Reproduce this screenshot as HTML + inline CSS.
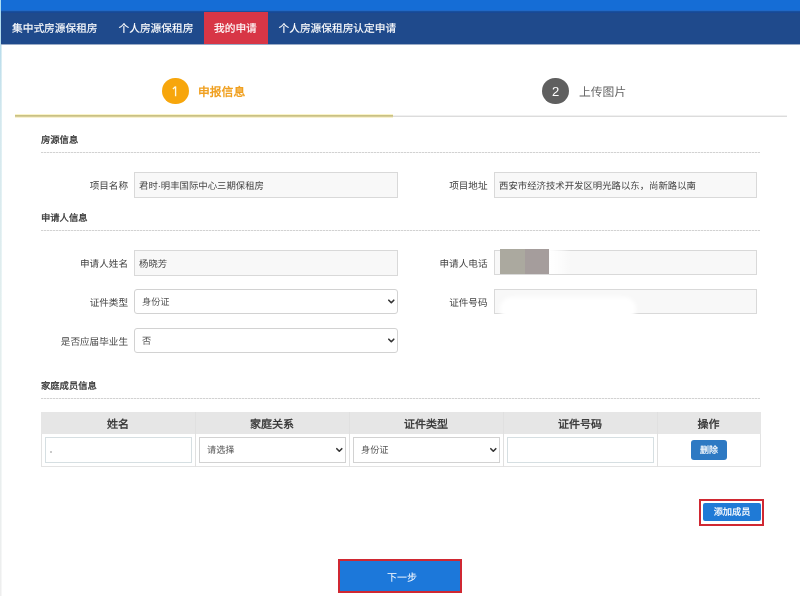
<!DOCTYPE html>
<html lang="zh-CN"><head><meta charset="utf-8">
<style>
*{margin:0;padding:0;box-sizing:border-box}
html,body{width:800px;height:596px;overflow:hidden;background:#fff;font-family:"Liberation Sans",sans-serif;position:relative;text-rendering:geometricPrecision}
#wrap{position:absolute;left:0;top:0;width:800px;height:596px;will-change:transform}
.abs{position:absolute}
#leftedge{left:0;top:0;width:1px;height:596px;background:linear-gradient(#a8dcf5 0,#b8dcec 45px,#d4e8ee 120px,#e2eeee 300px,#eeeeee 596px)}
#leftedge2{left:1px;top:45px;width:1px;height:551px;background:linear-gradient(#d8ecf2,#eef6f6 300px,#f6f6f6)}
#topband{left:0;top:0;width:800px;height:11px;background:linear-gradient(#156dd6 0 10px,#2068c6 10px 11px)}
#nav{left:0;top:11px;width:800px;height:34px;background:linear-gradient(#17509f 0 1px,#184896 1px 2px,#1f4a8c 2px 33px,#9aabc6 33px 34px)}
.nv{position:absolute;top:13px;height:33px;line-height:33px;color:#fff;-webkit-text-stroke:0.15px #fff;font-size:10.7px;white-space:nowrap}
#tab{left:204px;top:12px;width:64px;height:32px;background:#d83646}
.circ{position:absolute;width:27px;height:27px;border-radius:50%;color:#fff;font-size:13px;text-align:center;line-height:27px}
.steptxt{position:absolute;font-size:11.8px;white-space:nowrap;line-height:14px}
.hdr{position:absolute;left:41px;font-size:9.3px;font-weight:normal;-webkit-text-stroke:0.3px #333;color:#333;white-space:nowrap;line-height:11px}
.dot{position:absolute;left:41px;width:719px;height:1px;background:repeating-linear-gradient(90deg,#d2d2d2 0 2px,#f0f0f0 2px 3px)}
.lbl{position:absolute;font-size:9.6px;color:#444;white-space:nowrap;text-align:right;line-height:11px}
.inp{position:absolute;height:26px;background:#f8f8f8;border:1px solid #d9d9d9;font-size:9.4px;color:#444;line-height:26px;padding-left:4px;white-space:nowrap}
.sel{position:absolute;height:25px;background:#fff;border:1px solid #d2d2d2;border-radius:3px;font-size:9.2px;color:#555;line-height:25px;padding-left:7px;white-space:nowrap}
.chev{position:absolute;width:8px;height:6px}
.th{position:absolute;top:414px;height:22px;line-height:22px;text-align:center;font-size:11px;font-weight:normal;-webkit-text-stroke:0.35px #333;color:#333;white-space:nowrap}
</style></head><body><div id="wrap">
<div class="abs" id="topband"></div>
<div class="abs" id="nav"></div>
<div class="abs" id="tab"></div>
<div class="nv" style="left:12px">集中式房源保租房</div>
<div class="nv" style="left:118.5px">个人房源保租房</div>
<div class="nv" style="left:214px">我的申请</div>
<div class="nv" style="left:278.5px">个人房源保租房认定申请</div>
<div class="abs" id="leftedge"></div><div class="abs" id="leftedge2"></div>

<!-- steps -->
<div class="circ" style="left:162px;top:77.7px;width:26.6px;height:26.6px;background:#f7a60c"></div>
<div class="steptxt" style="left:198px;top:85px;color:#f0a020;font-weight:bold">申报信息</div>
<div class="circ" style="left:542.3px;top:77.7px;width:26.6px;height:26.6px;line-height:28px;background:#5f5f5f">2</div>
<div class="steptxt" style="left:579px;top:85px;color:#666">上传图片</div>
<div class="abs" style="left:15px;top:114px;width:378px;height:4px;background:linear-gradient(#fbf4c8 0 1px,#c9c184 1px 2px,#d6cd99 2px 3px,#f8f1cf 3px 4px)"></div>
<div class="abs" style="left:393px;top:115px;width:394px;height:2px;background:linear-gradient(#f0f0f0 0 1px,#dcdcdc 1px 2px)"></div>

<!-- section 1 -->
<div class="hdr" style="top:135px">房源信息</div>
<div class="dot" style="top:152px"></div>
<div class="lbl" style="left:61px;width:67px;top:181px">项目名称</div>
<div class="inp" style="left:134px;top:172px;width:264px">君时·明丰国际中心三期保租房</div>
<div class="lbl" style="left:421px;width:66.5px;top:181px">项目地址</div>
<div class="inp" style="left:494px;top:172px;width:263px">西安市经济技术开发区明光路以东，尚新路以南</div>

<!-- section 2 -->
<div class="hdr" style="top:213px">申请人信息</div>
<div class="dot" style="top:230px"></div>
<div class="lbl" style="left:61px;width:67px;top:259px">申请人姓名</div>
<div class="inp" style="left:134px;top:250px;width:264px">杨晓芳</div>
<div class="lbl" style="left:421px;width:66.5px;top:259px">申请人电话</div>
<div class="inp" style="left:494px;top:250px;width:263px;height:25px"></div>
<div class="abs" style="left:500px;top:249px;width:25px;height:25px;background:#aba99f"></div>
<div class="abs" style="left:525px;top:249px;width:25px;height:25px;background:#a59d9c"></div>
<div class="abs" style="left:549px;top:249px;width:22px;height:25px;background:linear-gradient(90deg,#fff,rgba(255,255,255,.5) 60%,rgba(255,255,255,0));"></div>

<div class="lbl" style="left:61px;width:67px;top:298px">证件类型</div>
<div class="sel" style="left:134px;top:289px;width:264px">身份证</div>
<div class="lbl" style="left:421px;width:66.5px;top:298px">证件号码</div>
<div class="inp" style="left:494px;top:289px;width:263px;height:25px"></div>
<div class="abs" style="left:500px;top:297px;width:136px;height:24px;background:#fff;border-radius:12px;filter:blur(2px)"></div>

<div class="lbl" style="left:41px;width:87px;top:337px">是否应届毕业生</div>
<div class="sel" style="left:134px;top:328px;width:264px">否</div>

<!-- section 3 -->
<div class="hdr" style="top:381px">家庭成员信息</div>
<div class="dot" style="top:398px"></div>

<!-- table -->
<div class="abs" style="left:41px;top:412px;width:720px;height:55px;border:1px solid #e3e3e3"></div>
<div class="abs" style="left:41px;top:412px;width:720px;height:22px;background:#e6e6e6"></div>
<div class="abs" style="left:195px;top:412px;width:1px;height:55px;background:#e0e0e0"></div>
<div class="abs" style="left:349px;top:412px;width:1px;height:55px;background:#e0e0e0"></div>
<div class="abs" style="left:503px;top:412px;width:1px;height:55px;background:#e0e0e0"></div>
<div class="abs" style="left:657px;top:412px;width:1px;height:55px;background:#e0e0e0"></div>
<div class="th" style="left:41px;width:154px">姓名</div>
<div class="th" style="left:195px;width:154px">家庭关系</div>
<div class="th" style="left:349px;width:154px">证件类型</div>
<div class="th" style="left:503px;width:154px">证件号码</div>
<div class="th" style="left:657px;width:103px">操作</div>
<div class="abs" style="left:45px;top:437px;width:147px;height:26px;border:1px solid #d6dfe2;background:#fff"></div>
<div class="abs" style="left:50px;top:451px;width:2px;height:2px;background:#b8b8b8;border-radius:1px"></div>
<div class="sel" style="left:199px;top:437px;width:147px;height:26px;border-radius:0;line-height:24px">请选择</div>
<div class="sel" style="left:353px;top:437px;width:147px;height:26px;border-radius:0;line-height:24px">身份证</div>
<div class="abs" style="left:507px;top:437px;width:147px;height:26px;border:1px solid #d6dfe2;background:#fff"></div>
<div class="abs" style="left:691px;top:440px;width:36px;height:20px;background:#2d79c3;border-radius:3px;color:#fff;-webkit-text-stroke:0.2px #fff;font-size:9px;text-align:center;line-height:21px">删除</div>

<!-- add member -->
<div class="abs" style="left:699px;top:499.3px;width:65px;height:26.4px;border:2px solid #d02832"></div>
<div class="abs" style="left:703px;top:503px;width:58px;height:18px;background:#1f7ad6;border-radius:2px;color:#fff;-webkit-text-stroke:0.2px #fff;font-size:9.2px;text-align:center;line-height:18px">添加成员</div>

<!-- next -->
<div class="abs" style="left:338px;top:559px;width:124px;height:34px;border:2px solid #d02832;background:#1c78da;color:#fff;font-size:10px;text-align:center;line-height:35px;text-indent:4px">下一步</div>

<!-- chevrons -->
<svg class="abs" style="left:0;top:0" width="800" height="596">
<path d="M175.6 86.6 V96.2 M175.6 86.6 L172.9 88.9" fill="none" stroke="#fff8e0" stroke-width="1.35" stroke-linejoin="round"/>
<g fill="none" stroke="#333" stroke-width="1.6" stroke-linecap="round" stroke-linejoin="round">
<path d="M388.8 300.2 L391.3 302.7 L393.8 300.2"/>
<path d="M388.8 339.2 L391.3 341.7 L393.8 339.2"/>
<path d="M336.8 448.7 L339.3 451.2 L341.8 448.7"/>
<path d="M490.8 448.7 L493.3 451.2 L495.8 448.7"/>
</g>
</svg>
</div></body></html>
